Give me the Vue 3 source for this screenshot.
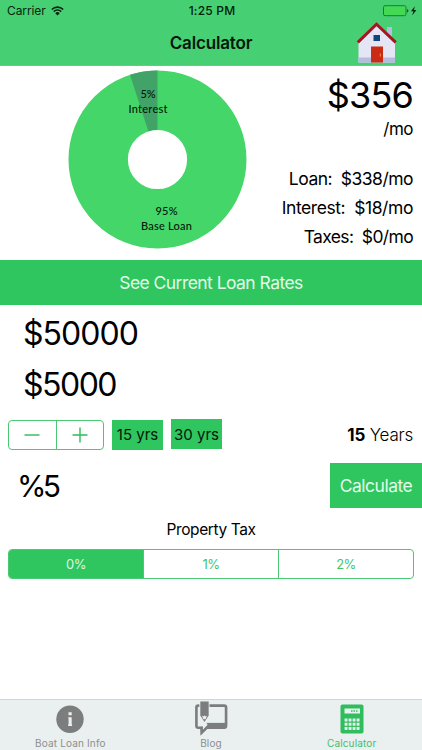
<template>
  <div class="screen">
    <header class="header">
      <div class="status-bar">
        <div class="status-left">
          <span class="carrier">Carrier</span>
          <svg class="wifi" width="13" height="10" viewBox="0 0 13 10">
            <path d="M0.8 3.5a8.1 8.1 0 0 1 11.4 0M2.8 5.6a5.2 5.2 0 0 1 7.4 0" fill="none" stroke="#06260f" stroke-width="1.6" />
            <path d="M4.3 7.2a3.1 3.1 0 0 1 4.4 0L6.5 9.5z" fill="#06260f" />
          </svg>
        </div>
        <span class="clock">1:25 PM</span>
        <div class="status-right">
          <svg width="34" height="12" viewBox="0 0 34 12">
            <rect x="0.5" y="0.7" width="22.5" height="10" rx="1.6" fill="#43d954" stroke="#1b7a35" />
            <path d="M24 4v3.6q1.4-.4 1.4-1.8T24 4z" fill="#125c28" />
            <path d="M31.9 1.2l-4 5.1h2.5l-1.2 4.2 4.2-5.4h-2.5z" fill="#06260f" />
          </svg>
        </div>
      </div>
      <div class="nav-bar">
        <h1 class="title">Calculator</h1>
        <svg class="house" width="42" height="42" viewBox="0 0 42 42">
          <path d="M31 5h5v14l-5-5z" fill="#b5bde0" />
          <path d="M20.5 3L39 21v19.5H2.5V21z" fill="#e4e5f5" />
          <path d="M2.5 35.5H39v5H2.5z" fill="#b8badf" />
          <path d="M1.8 20.3L20.5 2.2 39.7 20.3" fill="none" stroke="#a51620" stroke-width="3" />
          <rect x="17.5" y="13" width="6.5" height="6" fill="#124481" />
          <rect x="15" y="24.5" width="12" height="16" fill="#cb2b12" />
          <path d="M24.3 31.5v3" stroke="#f28b60" />
        </svg>
      </div>
    </header>

    <section class="summary">
      <svg class="chart" width="180" height="180" viewBox="0 0 180 180">
        <circle cx="90.5" cy="90.5" r="59.3" fill="none" stroke="#44d668" stroke-width="59.4" />
        <path d="M90.5 1.5A89 89 0 0 0 63 5.86L81.32 62.25A29.7 29.7 0 0 1 90.5 60.8z" fill="#42a368" />
        <g class="chart-label">
          <text x="81" y="28.5">5%</text>
          <text x="81" y="43.5" textLength="39">Interest</text>
          <text x="99.5" y="145.5" textLength="22">95%</text>
          <text x="99.5" y="161" textLength="51">Base Loan</text>
        </g>
      </svg>
      <div class="totals">
        <div class="total">${{ monthly }}</div>
        <div class="per-month">/mo</div>
        <div v-for="row in breakdown" :key="row.label" class="line">
          {{ row.label }}:&nbsp; ${{ row.amount }}/mo
        </div>
      </div>
    </section>

    <button class="rates-btn">See Current Loan Rates</button>

    <div class="amount">$50000</div>
    <div class="amount down">$5000</div>

    <div class="term-row">
      <div class="stepper">
        <button class="step" @click="years = Math.max(1, years - 1)">
          <svg width="16" height="16" viewBox="0 0 16 16"><path d="M0.5 8h15" /></svg>
        </button>
        <button class="step" @click="years++">
          <svg width="16" height="16" viewBox="0 0 16 16"><path d="M0.5 8h15M8 0.5v15" /></svg>
        </button>
      </div>
      <button class="preset" @click="years = 15">15 yrs</button>
      <button class="preset raised" @click="years = 30">30 yrs</button>
      <div class="years"><b>{{ years }}</b> Years</div>
    </div>

    <div class="rate-row">
      <div class="rate">%5</div>
      <button class="calc-btn">Calculate</button>
    </div>

    <div class="tax-title">Property Tax</div>
    <div class="segments">
      <button
        v-for="t in taxes"
        :key="t"
        :class="['segment', { active: tax === t }]"
        @click="tax = t"
      >{{ t }}%</button>
    </div>

    <nav class="tab-bar">
      <div class="tab">
        <svg width="28" height="32" viewBox="0 0 28 32">
          <circle cx="14" cy="16.2" r="13.7" fill="#7c7e7e" />
          <path d="M12.5 9.3h3.2v3h-3.2zM12.2 14.2h3.5v7.4h.4v1.3h-4v-1.3h.5v-6.1h-.4z" fill="#eaefef" />
        </svg>
        <span class="tab-label">Boat Loan Info</span>
      </div>
      <div class="tab">
        <svg width="34" height="36" viewBox="0 0 34 36">
          <path d="M5 4.7H4a2 2 0 0 0-2 2v18.800a2 2 0 0 0 2 2h3.500v5l5-5h18a2 2 0 0 0 2-2v-18.800a2 2 0 0 0-2-2H15.500" fill="none" stroke="#7c7e7e" stroke-width="2.700" />
          <path d="M12 22.500h20.500v5.500H12z" fill="#7c7e7e" />
          <path d="M6 26.500h4.500v-2.500l2.500 3-6.500 7.500z" fill="#7c7e7e" />
          <path d="M6 16l-2.300 4.500v5.300h5v3.800l4.800-5.100-1.800-3z" fill="#eaefef" />
          <path d="M6 0.500h8.600v14.500l-4.300 6.500L6 15z" fill="#7c7e7e" />
          <path d="M7.500 15l1.400 1 1.400-1 1.400 1 1.400-1-1.800 3.800H9.300z" fill="#eaefef" />
        </svg>
        <span class="tab-label">Blog</span>
      </div>
      <div class="tab active">
        <svg width="24" height="30" viewBox="0 0 24 30">
          <rect x="0.5" y="0.5" width="23" height="29" rx="2" fill="#2ebe5d" />
          <rect x="4.5" y="4.5" width="15.5" height="5" fill="#eaefef" />
          <path d="M11 7h7" stroke="#2ebe5d" stroke-width="1.3" stroke-dasharray="1.5 1" />
          <template v-for="r in 3" :key="r">
            <rect v-for="c in 4" :key="c" :x="0.6 + c * 4" :y="10.3 + r * 4.2" width="2.9" height="3" fill="#eaefef" />
          </template>
        </svg>
        <span class="tab-label">Calculator</span>
      </div>
    </nav>
  </div>
</template>

<script setup>
import { ref, computed } from 'vue'

const years = ref(15)
const tax = ref(0)
const taxes = [0, 1, 2]

const breakdown = [
  { label: 'Loan', amount: 338 },
  { label: 'Interest', amount: 18 },
  { label: 'Taxes', amount: 0 }
]

const monthly = computed(() => breakdown.reduce((sum, row) => sum + row.amount, 0))
</script>

<style>
body {
  margin: 0;
  background: #fff;
}
</style>

<style scoped>
.screen {
  width: 422px;
  height: 750px;
  display: flex;
  flex-direction: column;
  overflow: hidden;
  background: #fff;
  color: #000;
  font-family: Inter, "Liberation Sans", sans-serif;
}
button {
  border: none;
  border-radius: 0;
  padding: 0;
  margin: 0;
  background: none;
  font-family: inherit;
  cursor: pointer;
}
.header {
  height: 66px;
  box-sizing: border-box;
  flex: none;
  background: #47cf73;
  border-bottom: 1px solid #6bc68a;
}
.status-bar {
  height: 22px;
  display: grid;
  grid-template-columns: 1fr auto 1fr;
  align-items: center;
  padding: 0 5px 0 7px;
  font-size: 12px;
  line-height: 22px;
  color: #06260f;
}
.status-left {
  display: flex;
  align-items: center;
  gap: 5px;
}
.carrier {
  letter-spacing: -0.1px;
}
.clock {
  font-weight: 500;
  letter-spacing: 0.2px;
  color: #04200c;
}
.status-right {
  display: flex;
  justify-content: flex-end;
}
.nav-bar {
  height: 42px;
  display: grid;
  grid-template-columns: 1fr auto 1fr;
  align-items: center;
}
.title {
  grid-column: 2;
  margin: 0;
  font-size: 17px;
  font-weight: 600;
  letter-spacing: -0.15px;
  color: #03180a;
}
.house {
  justify-self: end;
  margin-right: 24px;
}
.summary {
  height: 194px;
  flex: none;
  display: flex;
  justify-content: space-between;
  padding: 0 9px 0 67px;
}
.chart {
  margin-top: 3px;
}
.chart-label {
  font-family: Lato, sans-serif;
  font-size: 11px;
  font-weight: 500;
  text-anchor: middle;
  fill: #03180a;
}
.totals {
  text-align: right;
  white-space: nowrap;
}
.total {
  padding-top: 8px;
  font-size: 36px;
  line-height: 43px;
  letter-spacing: -0.8px;
}
.per-month {
  height: 50px;
  font-size: 17px;
  line-height: 24px;
  letter-spacing: -0.5px;
  margin-bottom: -3px;
}
.line {
  font-size: 17.5px;
  line-height: 29px;
  letter-spacing: -0.52px;
}
.line:nth-child(4) {
  letter-spacing: -0.42px;
}
.line:nth-child(5) {
  letter-spacing: -0.65px;
}
.rates-btn {
  height: 45px;
  flex: none;
  background: #2fc55f;
  color: #e2fbe9;
  font-size: 17.5px;
  letter-spacing: -0.55px;
}
.amount {
  height: 51px;
  flex: none;
  padding-left: 23px;
  font-size: 32px;
  line-height: 58px;
  letter-spacing: -0.95px;
}
.amount.down {
  letter-spacing: -1.5px;
}
.term-row {
  height: 31px;
  flex: none;
  display: flex;
  align-items: center;
  margin-top: 12px;
  padding: 0 9px 0 8px;
}
.stepper {
  display: flex;
  width: 96px;
  height: 30px;
  box-sizing: border-box;
  border: 1px solid #4bc873;
  border-radius: 4px;
}
.step {
  flex: 1;
  display: flex;
  align-items: center;
  justify-content: center;
}
.step + .step {
  border-left: 1px solid #4bc873;
}
.step path {
  stroke: #2fb95b;
  stroke-width: 1.4;
}
.preset {
  width: 51px;
  height: 30px;
  margin-left: 8px;
  background: #2fc55f;
  color: #03180a;
  font-size: 15px;
}
.preset.raised {
  margin-top: -1px;
}
.years {
  margin-left: auto;
  font-size: 17px;
  font-weight: 300;
  letter-spacing: -0.2px;
}
.years b {
  font-weight: 700;
}
.rate-row {
  height: 45px;
  flex: none;
  display: flex;
  align-items: center;
  justify-content: space-between;
  margin-top: 13px;
  padding-left: 17px;
}
.rate {
  font-size: 30px;
  letter-spacing: -3.8px;
}
.calc-btn {
  width: 92px;
  height: 45px;
  background: #2fc55f;
  color: #e2fbe9;
  font-size: 17.5px;
  letter-spacing: -0.5px;
}
.tax-title {
  margin-top: 11px;
  font-size: 15.5px;
  line-height: 21px;
  letter-spacing: -0.4px;
  text-align: center;
}
.segments {
  height: 30px;
  box-sizing: border-box;
  flex: none;
  display: flex;
  margin: 9px 8px 0;
  border: 1px solid #4bc873;
  border-radius: 4px;
  overflow: hidden;
}
.segment {
  flex: 1;
  font-size: 13px;
  letter-spacing: -0.6px;
  color: #3fc56a;
}
.segment + .segment {
  border-left: 1px solid #4bc873;
}
.segment.active {
  background: #2fc55f;
  color: #d9f9e2;
}
.tab-bar {
  height: 51px;
  flex: none;
  display: flex;
  margin-top: auto;
  border-top: 1px solid #d0d6d6;
  background: #eaefef;
  box-sizing: border-box;
}
.tab {
  flex: 1;
  display: flex;
  flex-direction: column;
  align-items: center;
  justify-content: space-between;
  color: #8b8f8f;
}
.tab svg {
  margin-top: 3px;
}
.tab:nth-child(2) svg {
  margin-top: 1px;
}
.tab.active svg {
  margin-top: 4px;
}
.tab.active {
  color: #45be6c;
}
.tab-label {
  font-size: 10px;
  line-height: 14px;
  letter-spacing: 0.15px;
}
</style>
